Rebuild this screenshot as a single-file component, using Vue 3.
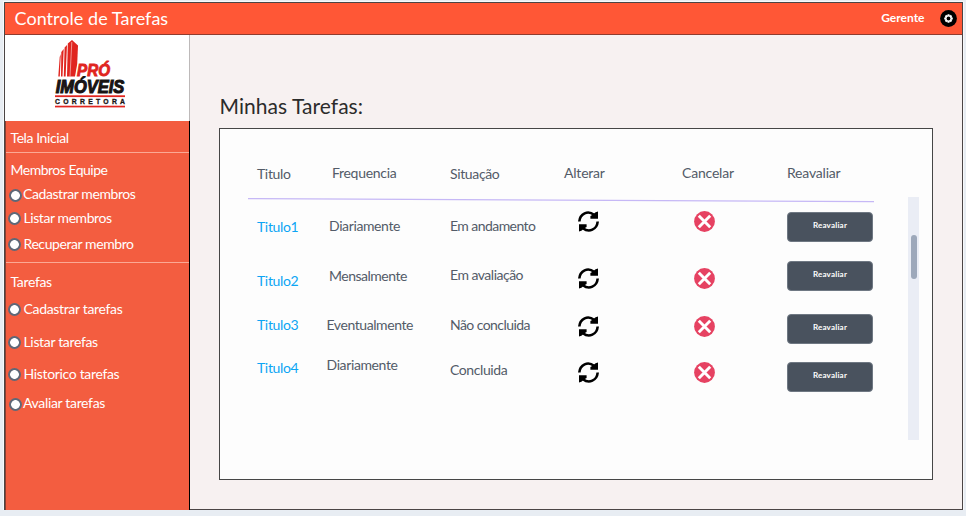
<script setup>
const groups = [
  { title: 'Membros Equipe', name: 'team', items: ['Cadastrar membros', 'Listar membros', 'Recuperar membro'] },
  { title: 'Tarefas', name: 'tasks', items: ['Cadastrar tarefas', 'Listar tarefas', 'Historico tarefas', 'Avaliar tarefas'] },
]
const headings = ['Titulo', 'Frequencia', 'Situação', 'Alterar', 'Cancelar', 'Reavaliar']
const tasks = [
  { title: 'Titulo1', frequency: 'Diariamente', status: 'Em andamento' },
  { title: 'Titulo2', frequency: 'Mensalmente', status: 'Em avaliação' },
  { title: 'Titulo3', frequency: 'Eventualmente', status: 'Não concluida' },
  { title: 'Titulo4', frequency: 'Diariamente', status: 'Concluida' },
]
</script>

<template>
  <div class="window">
    <header class="topbar">
      <h1>Controle de Tarefas</h1>
      <div class="user">
        <span>Gerente</span>
        <svg class="gear" viewBox="0 0 17 17">
          <circle cx="8.5" cy="8.5" r="8.4" fill="#000" />
          <path d="M8.5 4.200v8.600M4.200 8.500h8.600M5.500 5.500l6 6M11.500 5.500l-6 6" stroke="#fff" stroke-width="2" />
          <circle cx="8.5" cy="8.5" r="3.300" fill="#fff" />
          <circle cx="8.5" cy="8.5" r="1.900" fill="#000" />
        </svg>
      </div>
    </header>
    <div class="body">
      <aside class="sidebar">
        <div class="brand">
          <svg class="logo" viewBox="0 0 72 70">
            <g fill="#e0251f">
              <path d="M12.800 3.500 17 0 23 5.500 22.200 24 20 36.500 12 36.500Z" />
              <path d="M9.600 7.500 12 5 10.600 36.500 8.800 36.500ZM6.300 12 8.700 9 7.500 36.500 6 36.500ZM4.700 17 5.800 14 4.800 36.500 3.300 36.500Z" />
              <rect x="0" y="55.300" width="70" height="1.800" />
              <rect x="0" y="65.700" width="70" height="1.700" />
            </g>
            <path d="M16.800 2 15 36.500" stroke="#fff" stroke-width=".5" />
            <text class="pro" x="22" y="35.700" textLength="33" lengthAdjust="spacingAndGlyphs">PRÓ</text>
            <text class="imoveis" x=".8" y="53.200" textLength="68.500" lengthAdjust="spacingAndGlyphs">IMÓVEIS</text>
            <text class="corretora" x="0" y="63.700" textLength="70">CORRETORA</text>
          </svg>
        </div>
        <nav class="menu">
          <div class="home">Tela Inicial</div>
          <section v-for="g in groups" :key="g.name" :class="['group', g.name]">
            <h2>{{ g.title }}</h2>
            <ul>
              <li v-for="item in g.items" :key="item"><i class="radio"></i><span>{{ item }}</span></li>
            </ul>
          </section>
        </nav>
      </aside>
      <main class="content">
        <h2 class="heading">Minhas Tarefas:</h2>
        <div class="panel">
          <div class="table">
            <div class="row head">
              <span v-for="h in headings" :key="h">{{ h }}</span>
            </div>
            <svg class="rule" viewBox="0 0 626 5"><path d="M0 .6 626 3.600" stroke="#c6b8f6" stroke-width="1.300" /></svg>
            <div v-for="t in tasks" :key="t.title" class="row task">
              <a class="title">{{ t.title }}</a>
              <span class="frequency">{{ t.frequency }}</span>
              <span class="status">{{ t.status }}</span>
              <svg class="icon refresh" viewBox="0 0 21 21">
                <g fill="none" stroke="#000" stroke-width="2.600">
                  <path d="M1.300 10.500C2 2.500 10-1 16 3.800" />
                  <path d="M19.700 10.500C19 18.500 11 22 5 17.200" />
                </g>
                <path d="M20 .6V7.800h-7.600V5l2.200-1.200 3-2.600Z" />
                <path d="M1 20.400V13.200h7.600V16l-2.200 1.200-3 2.600Z" />
              </svg>
              <svg class="icon cancel" viewBox="0 0 21 21">
                <circle cx="10.500" cy="10.500" r="10.400" fill="#e64262" />
                <path d="M4.800 4.800l11.400 11.400M16.200 4.800 4.800 16.200" stroke="#fff" stroke-width="2.900" />
              </svg>
              <button type="button">Reavaliar</button>
            </div>
          </div>
          <div class="track"><div class="thumb"></div></div>
        </div>
      </main>
    </div>
  </div>
</template>

<style>
body { background: #e8edf3; }
</style>

<style scoped>
* { box-sizing: border-box; }
h1, h2, ul { margin: 0; padding: 0; font-weight: 400; list-style: none; }
.window {
  width: 959px; height: 508px; margin: 2px 0 0 4px;
  display: flex; flex-direction: column;
  border: 1px solid #4b4545; background: #f7f1f1;
  font-family: Lato, sans-serif; font-size: 14px; line-height: 18px;
  box-shadow: 0 0 0 1px #f7f9fb;
}
.topbar {
  flex: none; height: 32px; padding: 0 5.5px 0 9.5px;
  display: flex; align-items: center; justify-content: space-between;
  background: #ff5736; border-bottom: 1px solid #913c2e; color: #fff;
}
.topbar h1 { font-size: 18px; line-height: 24px; margin-top: -2px; letter-spacing: .04px; }
.user { display: flex; align-items: center; gap: 15px; font-size: 12px; font-weight: 700; margin-top: -1px; }
.gear { width: 17px; height: 17px; margin-top: 1px; }
.body { flex: 1; min-height: 0; display: flex; }
.sidebar { width: 185px; display: flex; flex-direction: column; margin-bottom: -3px; }
.brand { height: 86px; flex: none; padding: 5px 0 0 50px; background: #fff; border-right: 1px solid #bdb9b9; }
.logo { display: block; width: 72px; height: 70px; overflow: visible; }
.logo text { font-family: "Liberation Sans", sans-serif; font-weight: 700; }
.pro { font-size: 16.500px; font-style: italic; fill: #e0251f; stroke: #e0251f; stroke-width: .9px; }
.imoveis { font-size: 17.800px; font-style: italic; fill: #181414; stroke: #181414; stroke-width: 1.1px; }
.corretora { font-size: 6.800px; fill: #181414; stroke: #181414; stroke-width: .3px; }
.menu {
  flex: 1; color: #fff; background: #f35d40; letter-spacing: -.42px;
  border-right: 1px solid #000; border-bottom: 1px solid #5b2920; border-left: 1px solid #8b3f31;
}
.home { height: 32px; padding: 8px 0 0 4.5px; border-bottom: 1px solid #fba894; }
.group h2 { font-size: 14px; line-height: 18px; padding-left: 4.5px; }
.team h2 { letter-spacing: -.5px; }
.team { height: 110px; padding-top: 8px; border-bottom: 1px solid #fba894; }
.tasks { padding-top: 10px; letter-spacing: -.33px; }
.group li { display: flex; align-items: center; gap: 2.5px; height: 18px; padding-left: 2px; }
.radio { width: 13px; height: 13px; border: 2.5px solid #5e6878; border-width: 2.5px; border-radius: 50%; background: radial-gradient(circle, #fff 4px, #5e6878 4.7px) border-box; border-color: transparent; }
.team li { margin-top: 6px; }
.team li:last-child { margin-top: 8px; }
.tasks li { margin-top: 14px; }
.tasks li:first-child { margin-top: 9px; }
.tasks li:nth-child(2) { margin-top: 15px; }
.tasks li:last-child { margin-top: 11px; }
.team li:first-child .radio, .tasks li:last-child .radio { margin: 3px -1.5px 0 1px; }
.content { flex: 1; padding: 57px 29px 0 29px; }
.heading { height: 36px; padding-left: .5px; font-size: 21px; line-height: 28px; letter-spacing: .05px; color: #2b2b2b; }
.panel {
  width: 714px; height: 352px; padding: 36px 13px 0 28px;
  display: flex; justify-content: space-between; border: 1px solid #464646; background: #fdfdfd;
}
.table { width: 626px; }
.row {
  display: grid; grid-template-columns: 72px 121px 114px 118px 105px 86px;
  align-items: start; justify-items: start; padding-left: 9px; color: #535b68; white-space: nowrap;
}
.head { height: 33px; letter-spacing: -.2px; }
.head span { margin-top: -1px; }
.head span:nth-child(2) { margin-left: 3px; letter-spacing: -.3px; }
.head span:first-child, .head span:nth-child(3) { margin-top: 0; letter-spacing: -.35px; }
.rule { display: block; width: 626px; height: 5px; }
.task { height: 30px; }
.title { color: #0ca5f4; letter-spacing: -.35px; }
.frequency { letter-spacing: -.46px; }
.status { letter-spacing: -.56px; }
.icon { width: 21px; height: 21px; }
.refresh { margin-left: 14px; }
.cancel { margin-left: 12px; }
button {
  width: 86px; height: 30px; padding: 0 0 4px; border: 1px solid #6f7883; border-radius: 4px;
  background: #49525e; color: #fff; font: 700 8px/12px Lato, sans-serif; letter-spacing: .2px;
}
.task:nth-child(3) { margin-top: 9px; }
.task:nth-child(3) .title { margin-top: 6px; }
.task:nth-child(3) .frequency, .task:nth-child(3) .status { margin-top: 5px; }
.task:nth-child(3) .frequency { letter-spacing: -.38px; }
.task:nth-child(3) .icon { margin-top: -1px; }
.task:nth-child(4) { margin-top: 19px; }
.task:nth-child(4) .title { margin-top: 11px; }
.task:nth-child(4) .frequency { margin-top: 6px; letter-spacing: -.5px; }
.task:nth-child(4) .status { margin-top: 5px; letter-spacing: -.5px; }
.task:nth-child(4) .icon { margin-top: 7px; }
.task:nth-child(5) { margin-top: 23px; }
.task:nth-child(5) .title, .task:nth-child(5) .status, .task:nth-child(5) .icon { margin-top: 2px; }
.task:nth-child(5) .frequency { margin: 2px 0 0 -2.5px; letter-spacing: -.42px; }
.task:nth-child(6) { margin-top: 18px; }
.task:nth-child(6) .title { margin-top: -3px; }
.task:nth-child(6) .frequency { margin: -6px 0 0 -2.5px; letter-spacing: -.38px; }
.task:nth-child(6) .status { margin-top: -1px; letter-spacing: -.4px; }
.track { width: 11px; height: 243px; margin-top: 32px; padding: 38px 2px 0 3px; background: #eaedf5; }
.thumb { height: 44px; border-radius: 3px; background: #9da8ba; }
</style>
